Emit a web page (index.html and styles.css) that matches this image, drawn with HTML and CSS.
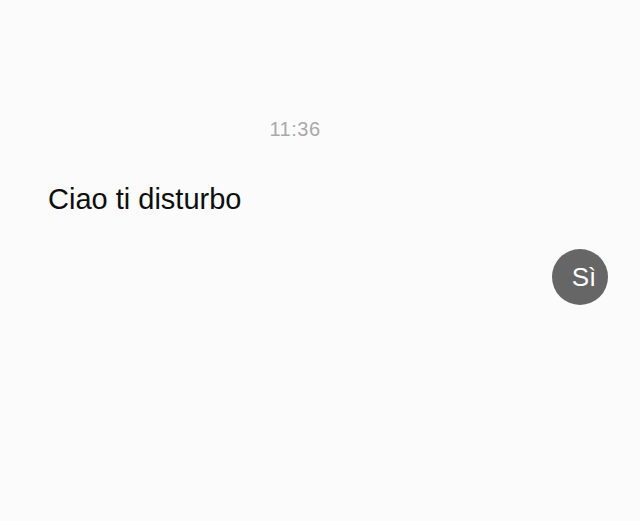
FILE: index.html
```html
<!DOCTYPE html>
<html lang="it">
<head>
  <meta charset="UTF-8">
  <meta name="viewport" content="width=device-width, initial-scale=1.0">
  <title>Chat</title>
  <link rel="stylesheet" href="styles.css">
</head>
<body>
  <div class="chat">
    <div class="time">11:36</div>
    <div class="msg msg-in">Ciao ti disturbo</div>
    <div class="msg-out">
      <div class="bubble">Sì</div>
    </div>
  </div>
</body>
</html>
```

FILE: styles.css
```css
body {
  font-family: "Liberation Sans", Arial, sans-serif;
  background-color: #fbfbfb;
  margin: 0;
  padding: 0;
}
.chat {
  display: flex;
  flex-direction: column;
  padding-top: 117px;
  height: 521px;
  box-sizing: border-box;
}
.time {
  text-align: center;
  padding-right: 50px;
  font-size: 20px;
  line-height: 24px;
  letter-spacing: 0.5px;
  color: #a9a9a9;
}
.msg-in {
  margin-top: 41px;
  padding-left: 48px;
  font-size: 29px;
  line-height: 34px;
  color: #0e0e0e;
}
.msg-out {
  display: flex;
  justify-content: flex-end;
  margin-top: 33px;
  padding-right: 32px;
}
.bubble {
  width: 56px;
  height: 56px;
  border-radius: 50%;
  background-color: #666;
  color: #fff;
  font-size: 26px;
  display: flex;
  align-items: center;
  justify-content: center;
  padding-left: 8px;
  box-sizing: border-box;
}
```
